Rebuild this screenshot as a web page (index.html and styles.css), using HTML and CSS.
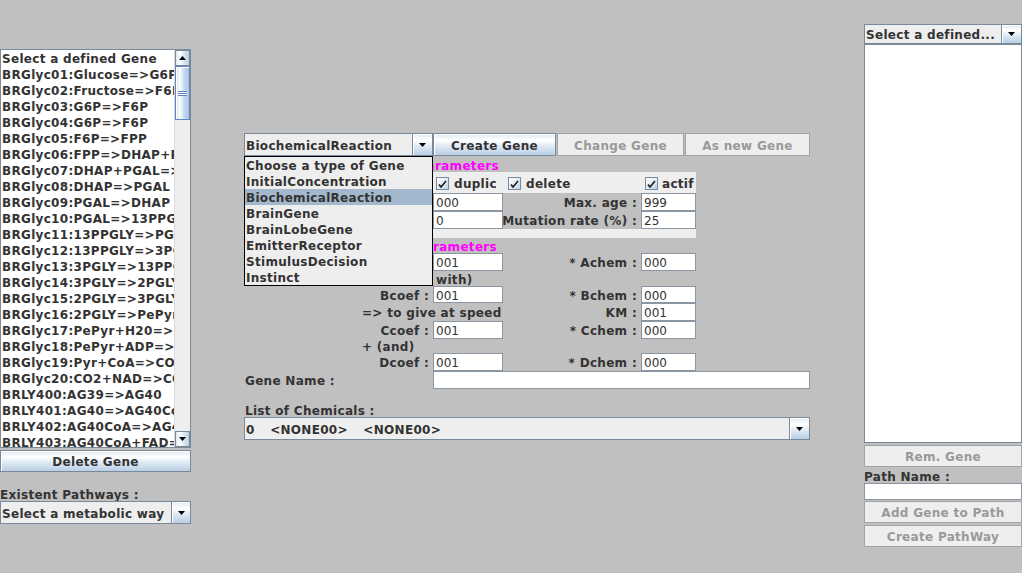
FILE: index.html
```html
<!DOCTYPE html>
<html>
<head>
<meta charset="utf-8">
<title>Gene editor</title>
<link rel="stylesheet" href="styles.css">
</head>
<body>
<div class="app">
  <aside class="left">
    <div class="glist">
      <ul class="items">
        <li>Select a defined Gene</li>
        <li>BRGlyc01:Glucose=&gt;G6P</li>
        <li>BRGlyc02:Fructose=&gt;F6P</li>
        <li>BRGlyc03:G6P=&gt;F6P</li>
        <li>BRGlyc04:G6P=&gt;F6P</li>
        <li>BRGlyc05:F6P=&gt;FPP</li>
        <li>BRGlyc06:FPP=&gt;DHAP+PGAL</li>
        <li>BRGlyc07:DHAP+PGAL=&gt;FPP</li>
        <li>BRGlyc08:DHAP=&gt;PGAL</li>
        <li>BRGlyc09:PGAL=&gt;DHAP</li>
        <li>BRGlyc10:PGAL=&gt;13PPGLY</li>
        <li>BRGlyc11:13PPGLY=&gt;PGAL</li>
        <li>BRGlyc12:13PPGLY=&gt;3PGLY</li>
        <li>BRGlyc13:3PGLY=&gt;13PPGLY</li>
        <li>BRGlyc14:3PGLY=&gt;2PGLY</li>
        <li>BRGlyc15:2PGLY=&gt;3PGLY</li>
        <li>BRGlyc16:2PGLY=&gt;PePyr</li>
        <li>BRGlyc17:PePyr+H20=&gt;2PGLY</li>
        <li>BRGlyc18:PePyr+ADP=&gt;Pyr+ATP</li>
        <li>BRGlyc19:Pyr+CoA=&gt;CO2+AcCoA</li>
        <li>BRGlyc20:CO2+NAD=&gt;CO2+NADH</li>
        <li>BRLY400:AG39=&gt;AG40</li>
        <li>BRLY401:AG40=&gt;AG40CoA</li>
        <li>BRLY402:AG40CoA=&gt;AG40</li>
        <li>BRLY403:AG40CoA+FAD=&gt;AG40E</li>
      </ul>
      <div class="vscroll">
        <div class="sarrow"><svg width="7" height="4" viewBox="0 0 7 4"><path d="M0 4h7L3.5 0z" fill="#000"/></svg></div>
        <div class="track">
          <div class="thumb"><span class="grip"></span></div>
        </div>
        <div class="sarrow"><svg width="7" height="4" viewBox="0 0 7 4"><path d="M0 0h7L3.5 4z" fill="#000"/></svg></div>
      </div>
    </div>
    <button class="btn del">Delete Gene</button>
    <div class="lbl path-lbl">Existent Pathways :</div>
    <div class="combo lcombo">
      <span class="ctext">Select a metabolic way</span>
      <span class="carrow"><svg width="7" height="4" viewBox="0 0 7 4"><path d="M0 0h7L3.5 4z" fill="#000"/></svg></span>
    </div>
  </aside>

  <main class="mid">
    <div class="toolbar">
      <div class="combo tcombo">
        <span class="ctext">BiochemicalReaction</span>
        <span class="carrow"><svg width="7" height="4" viewBox="0 0 7 4"><path d="M0 0h7L3.5 4z" fill="#000"/></svg></span>
      </div>
      <button class="btn create">Create Gene</button>
      <button class="btn off change">Change Gene</button>
      <button class="btn off asnew">As new Gene</button>
    </div>

    <div class="form">
      <div class="title t1">Parameters</div>
      <div class="general">
        <label class="chk k3"><span class="box"><svg width="9" height="8" viewBox="0 0 9 8"><path d="M1 4.5L3 7L8 1" stroke="#222" stroke-width="1.7" fill="none"/></svg></span>duplic</label>
        <label class="chk k4"><span class="box"><svg width="9" height="8" viewBox="0 0 9 8"><path d="M1 4.5L3 7L8 1" stroke="#222" stroke-width="1.7" fill="none"/></svg></span>delete</label>
        <label class="chk k5"><span class="box"><svg width="9" height="8" viewBox="0 0 9 8"><path d="M1 4.5L3 7L8 1" stroke="#222" stroke-width="1.7" fill="none"/></svg></span>actif</label>
        <span class="field c3 r2">000</span>
        <span class="lab gray c4 r2">Max. age :</span>
        <span class="field c5 r2">999</span>
        <span class="field c3 r3">0</span>
        <span class="lab gray c4 r3">Mutation rate (%) :</span>
        <span class="field c5 r3">25</span>
      </div>
      <div class="title t2">Parameters</div>

      <span class="lab c12">Acoef :</span>
      <span class="field c3">001</span>
      <span class="lab c4">* Achem :</span>
      <span class="field c5">000</span>

      <span class="txt with">+ (reacts with)</span>

      <span class="lab c12">Bcoef :</span>
      <span class="field c3">001</span>
      <span class="lab c4">* Bchem :</span>
      <span class="field c5">000</span>

      <span class="txt c23">=&gt; to give at speed</span>
      <span class="lab c4">KM :</span>
      <span class="field c5">001</span>

      <span class="lab c12">Ccoef :</span>
      <span class="field c3">001</span>
      <span class="lab c4">* Cchem :</span>
      <span class="field c5">000</span>

      <span class="txt c23">+ (and)</span>

      <span class="lab c12">Dcoef :</span>
      <span class="field c3">001</span>
      <span class="lab c4">* Dchem :</span>
      <span class="field c5">000</span>

      <span class="txt gname">Gene Name :</span>
      <span class="field wide"></span>

      <span class="txt chems">List of Chemicals :</span>
      <div class="combo chcombo">
        <span class="ctext">0    &lt;NONE00&gt;    &lt;NONE00&gt;</span>
        <span class="carrow"><svg width="7" height="4" viewBox="0 0 7 4"><path d="M0 0h7L3.5 4z" fill="#000"/></svg></span>
      </div>
    </div>

    <ul class="popup">
      <li>Choose a type of Gene</li>
      <li>InitialConcentration</li>
      <li class="sel">BiochemicalReaction</li>
      <li>BrainGene</li>
      <li>BrainLobeGene</li>
      <li>EmitterReceptor</li>
      <li>StimulusDecision</li>
      <li>Instinct</li>
    </ul>
  </main>

  <aside class="right">
    <div class="combo rcombo">
      <span class="ctext">Select a defined...</span>
      <span class="carrow"><svg width="7" height="4" viewBox="0 0 7 4"><path d="M0 0h7L3.5 4z" fill="#000"/></svg></span>
    </div>
    <div class="rlist"></div>
    <button class="btn off rem">Rem. Gene</button>
    <div class="lbl pname">Path Name :</div>
    <span class="field rfield"></span>
    <button class="btn off addg">Add Gene to Path</button>
    <button class="btn off cpath">Create PathWay</button>
  </aside>
</div>
</body>
</html>
```

FILE: styles.css
```css
* { box-sizing: border-box; margin: 0; padding: 0; }
html, body { width: 1022px; height: 573px; overflow: hidden; }
body {
  background: #c0c0c0;
  font-family: "DejaVu Sans", "Liberation Sans", sans-serif;
  font-weight: bold;
  font-size: 12px;
  letter-spacing: 0.3px;
  color: #333333;
}
.app { display: flex; align-items: flex-start; height: 573px; }

/* ---------- generic widgets ---------- */
.btn {
  display: block;
  height: 22px;
  padding-top: 2px;
  border: 1px solid #7a8a99;
  background: linear-gradient(to bottom, #dde8f3 0%, #ffffff 30%, #dde8f3 60%, #b8cfe5 100%);
  box-shadow: inset 1px 1px 0 #ffffff;
  font: inherit;
  letter-spacing: inherit;
  color: #333333;
  text-align: center;
}
.btn.off {
  background: #eeeeee;
  border-color: #a3a3a3;
  box-shadow: none;
  color: #999999;
}
.combo {
  display: flex;
  border: 1px solid #7a8a99;
  background: #eeeeee;
}
.combo .ctext {
  flex: 1;
  padding-left: 1px;
  padding-top: 2px;
  white-space: pre;
  overflow: hidden;
  display: flex;
  align-items: center;
}
.combo .carrow {
  width: 20px;
  border-left: 1px solid #7a8a99;
  background: linear-gradient(to bottom, #dde8f3 0%, #ffffff 30%, #dde8f3 60%, #b8cfe5 100%);
  box-shadow: inset 1px 1px 0 #ffffff;
  display: flex;
  align-items: center;
  justify-content: center;
}
.field {
  background: #ffffff;
  border: 1px solid #8a97a3;
  font-weight: normal;
  letter-spacing: 0;
  color: #333333;
  padding-left: 2px;
  padding-top: 2px;
  display: flex;
  align-items: center;
}
.lbl { line-height: 14px; }

/* ---------- left column ---------- */
.left { width: 191px; padding-top: 49px; display: flex; flex-direction: column; }
.glist {
  height: 399px;
  border: 1px solid #7a8a99;
  background: #ffffff;
  display: flex;
}
.glist .items { flex: 1; list-style: none; overflow: hidden; white-space: nowrap; padding-top: 1px; }
.glist li { height: 16px; line-height: 16px; padding-left: 1px; }
.vscroll {
  width: 16px;
  display: flex;
  flex-direction: column;
  background: #eeeeee;
  border-left: 1px solid #d8dde3;
}
.sarrow {
  height: 16px;
  border: 1px solid #7a8a99;
  background: linear-gradient(to right, #dde8f3 0%, #ffffff 30%, #dde8f3 60%, #b8cfe5 100%);
  display: flex;
  align-items: center;
  justify-content: center;
}
.track { flex: 1; }
.thumb {
  height: 54px;
  border: 1px solid #6382bf;
  background: linear-gradient(to right, #c8ddf2 0%, #ffffff 30%, #c8ddf2 60%, #a9c3e0 100%);
  box-shadow: inset 1px 1px 0 #ffffff;
  display: flex;
  align-items: center;
  justify-content: center;
}
.grip {
  width: 9px;
  height: 5px;
  background: repeating-linear-gradient(to bottom, #6382bf 0, #6382bf 1px, #ffffff 1px, #ffffff 2px);
}
.del { margin-top: 2px; }
.path-lbl { margin-top: 15px; padding-top: 1px; height: 15px; }
.lcombo { height: 23px; margin-top: -1px; }
.lcombo .carrow { width: 19px; }

/* ---------- middle column ---------- */
.mid { width: 566px; margin-left: 53px; margin-top: 133px; position: relative; }
.toolbar { display: flex; height: 23px; gap: 1px; }
.toolbar .btn { height: 23px; }
.tcombo { width: 189px; margin-right: -1px; }
.create { width: 123px; }
.change { width: 127px; }
.asnew { width: 125px; }

.form {
  display: grid;
  grid-template-columns: 118px 71px 70px 138px 55px 114px;
  grid-template-rows: 16px 66px 15px 18px 15px 17px 18px 18px 14px 18px 18px 28px 23px;
}
.title {
  grid-column: 1 / 4;
  color: #ff00ff;
  text-align: right;
  line-height: 14px;
}
.t1 { padding-right: 4px; padding-top: 3px; }
.t2 { padding-right: 6px; padding-top: 2px; }

.general {
  grid-column: 1 / 6;
  background: #eeeeee;
  display: grid;
  grid-template-columns: 118px 71px 70px 138px 55px;
  grid-template-rows: 21px 18px 18px;
  padding-bottom: 9px;
}
.chk {
  grid-row: 1;
  display: flex;
  align-items: center;
  gap: 5px;
  padding-top: 2px;
}
.chk.k3 { grid-column: 3; padding-left: 3px; }
.chk.k4 { grid-column: 4; padding-left: 5px; }
.chk.k5 { grid-column: 5; padding-left: 4px; gap: 4px; }
.box {
  width: 13px;
  height: 13px;
  border: 1px solid #7a8a99;
  background: linear-gradient(to bottom right, #ffffff 0%, #dde8f3 60%, #b8cfe5 100%);
  display: flex;
  align-items: center;
  justify-content: center;
}
.r2 { grid-row: 2; }
.r3 { grid-row: 3; }

.lab {
  text-align: right;
  padding-right: 4px;
  padding-top: 2px;
  height: 16px;
  line-height: 14px;
  align-self: center;
  white-space: nowrap;
}
.lab.gray {
  background: #c0c0c0;
  align-self: stretch;
  height: auto;
  display: flex;
  align-items: center;
  justify-content: flex-end;
}
.c12 { grid-column: 1 / 3; }
.c3 { grid-column: 3; }
.c4 { grid-column: 4; }
.c5 { grid-column: 5; }
.c23 { grid-column: 2 / 4; }

.txt { line-height: 14px; height: 16px; padding-top: 2px; align-self: center; white-space: nowrap; }
.with { grid-column: 2 / 5; padding-left: 5px; }
.gname { grid-column: 1 / 3; padding-left: 1px; }
.field.wide { grid-column: 3 / 7; }
.chems { grid-column: 1 / 7; align-self: end; line-height: 14px; height: 15px; padding-top: 1px; padding-left: 1px; margin-bottom: -1px; }
.chcombo { grid-column: 1 / 7; }
.chcombo .ctext { word-spacing: -0.6px; }

.popup {
  position: absolute;
  left: 0;
  top: 23px;
  width: 189px;
  height: 130px;
  border: 1px solid #000000;
  background: #eeeeee;
  list-style: none;
  z-index: 2;
}
.popup li { height: 16px; line-height: 16px; padding-top: 1px; padding-left: 1px; white-space: nowrap; overflow: hidden; }
.popup li.sel { background: #a3b8cc; }

/* ---------- right column ---------- */
.right { width: 158px; margin-left: 54px; padding-top: 24px; display: flex; flex-direction: column; }
.rcombo { height: 20px; }
.rcombo .ctext { padding-top: 1px; }
.rlist { height: 399px; border: 1px solid #7a8a99; background: #ffffff; }
.rem { margin-top: 2px; }
.pname { margin-top: 1px; height: 15px; line-height: 14px; padding-top: 2px; }
.rfield { height: 17px; }
.addg { margin-top: 1px; }
.cpath { margin-top: 2px; }
```
